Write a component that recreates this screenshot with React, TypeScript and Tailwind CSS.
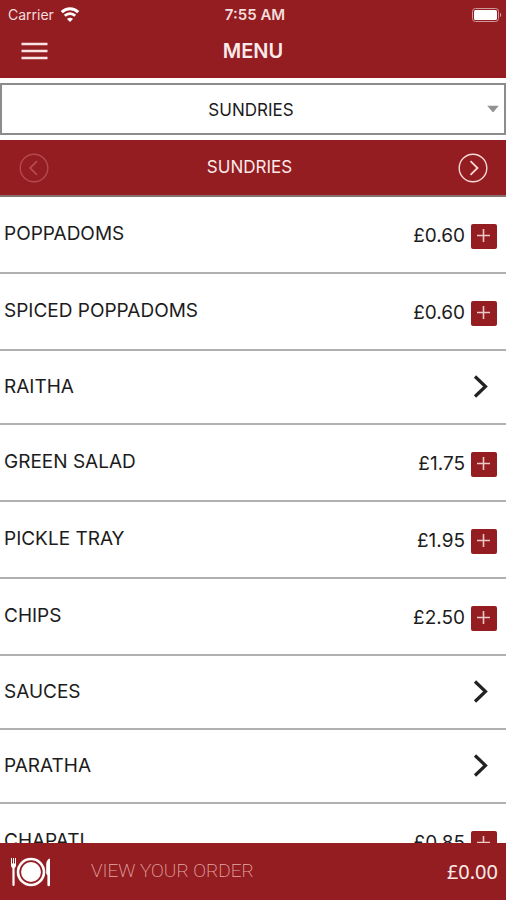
import { useState } from "react";

interface MenuItem {
  name: string;
  price?: number;
}

const sections = ["SUNDRIES"];

const items: MenuItem[] = [
  { name: "POPPADOMS", price: 0.6 },
  { name: "SPICED POPPADOMS", price: 0.6 },
  { name: "RAITHA" },
  { name: "GREEN SALAD", price: 1.75 },
  { name: "PICKLE TRAY", price: 1.95 },
  { name: "CHIPS", price: 2.5 },
  { name: "SAUCES" },
  { name: "PARATHA" },
  { name: "CHAPATI", price: 0.85 },
];

const formatPrice = (value: number) => `£${value.toFixed(2)}`;

function StatusBar() {
  return (
    <div className="grid h-6 grid-cols-3 items-center pt-1 pl-2 pr-1 text-sm text-[#f6dcdc]">
      <div className="flex items-center gap-1.5">
        <span>Carrier</span>
        <svg viewBox="0 0 20 15" className="h-4 w-5" fill="none" stroke="#fff" aria-hidden="true">
          <path d="M1.8 4.6a11.6 11.6 0 0 1 16.4 0" strokeWidth="3" />
          <path d="M4.8 8.2a7.4 7.4 0 0 1 10.4 0" strokeWidth="2.8" />
          <path d="M10 14.4 7 11.4a4.2 4.2 0 0 1 6 0z" fill="#fff" stroke="none" />
        </svg>
      </div>
      <span className="text-center text-[15px] font-semibold">7:55 AM</span>
      <svg viewBox="0 0 30 14" className="h-3.5 w-[30px] justify-self-end" aria-hidden="true">
        <rect x="0.5" y="0.5" width="26" height="13" rx="3" fill="none" stroke="#cf9a9c" />
        <rect x="2" y="2" width="23" height="10" rx="1.5" fill="#fff" />
        <path d="M28 4.8c1.6.6 1.6 3.8 0 4.4z" fill="#cf9a9c" />
      </svg>
    </div>
  );
}

function ArrowButton({
  direction,
  disabled,
}: {
  direction: "left" | "right";
  disabled?: boolean;
}) {
  return (
    <button
      type="button"
      disabled={disabled}
      aria-label={direction === "left" ? "Previous section" : "Next section"}
      className="text-[#f7d9d6] disabled:text-[#b54a4c]"
    >
      <svg viewBox="0 0 30 30" className="size-[30px]" fill="none" stroke="currentColor">
        <circle cx="15" cy="15" r="13.8" strokeWidth="1.4" />
        <path
          d={direction === "left" ? "M18 8.2 11 15l7 6.8" : "M12.5 8.2l7 6.8-7 6.8"}
          strokeWidth="1.8"
        />
      </svg>
    </button>
  );
}

function ItemRow({ item, onAdd }: { item: MenuItem; onAdd: (price: number) => void }) {
  const { name, price } = item;

  if (price === undefined) {
    return (
      <li className="border-b-2 border-[#b0b0b0]">
        <button type="button" className="flex h-[72px] w-full items-center justify-between pl-1 pr-4">
          <span>{name}</span>
          <svg
            viewBox="0 0 18 26"
            className="h-[26px] w-[18px]"
            fill="none"
            stroke="#222"
            strokeWidth="3.2"
            aria-hidden="true"
          >
            <path d="M3 2.5 13.5 12.5 3 22.5" />
          </svg>
        </button>
      </li>
    );
  }

  return (
    <li className="flex h-[77px] items-center justify-between border-b-2 border-[#b0b0b0] pl-1 pr-[9px]">
      <span>{name}</span>
      <div className="flex items-center gap-1.5 pt-1">
        <span>{formatPrice(price)}</span>
        <button
          type="button"
          aria-label={`Add ${name}`}
          onClick={() => onAdd(price)}
          className="rounded-xs bg-[#931d21]"
        >
          <svg viewBox="0 0 26 25" className="h-[25px] w-[26px]" stroke="#ecc9c7" strokeWidth="1.6">
            <path d="M12.5 5v13M6 11.5h13" />
          </svg>
        </button>
      </div>
    </li>
  );
}

function PlateIcon() {
  return (
    <svg viewBox="0 0 40 30" className="h-[30px] w-10" fill="#fff" aria-hidden="true">
      {/* fork */}
      <path d="M0 1h1v5.5h1V1h1v5.5h1V1h1v7.500c0 1.300-.7 2-1.400 2.400V28a1.100 1.100 0 0 1-2.200 0V10.900C.7 10.500 0 9.800 0 8.500z" />
      {/* plate */}
      <circle cx="20" cy="15" r="14.300" />
      <circle cx="20" cy="15" r="10.800" fill="none" stroke="#931d21" strokeWidth="1.700" />
      {/* knife */}
      <path d="M39 1.500V28a1.300 1.300 0 0 1-2.600 0V18.500l-1.200-2V8c0-3 1.300-6 3.800-6.500z" />
    </svg>
  );
}

export default function App() {
  const [section, setSection] = useState(sections[0]);
  const [total, setTotal] = useState(0);

  return (
    <div className="flex h-screen flex-col overflow-hidden bg-white font-['Inter',sans-serif] text-[#1c1c1c]">
      <header className="bg-[#931d21]">
        <StatusBar />
        <div className="grid h-[54px] grid-cols-3 items-center px-5">
          <button type="button" aria-label="Open menu" className="justify-self-start">
            <svg viewBox="0 0 28 18" className="h-[18px] w-7" stroke="#f9e3e2" strokeWidth="2.4">
              <path d="M1.500 2h26M1.500 9h26M1.500 16h26" />
            </svg>
          </button>
          <h1 className="text-center text-xl font-semibold text-[#fbeae9]">MENU</h1>
        </div>
      </header>

      <div className="relative my-[5px]">
        <select
          aria-label="Menu section"
          value={section}
          onChange={(e) => setSection(e.target.value)}
          className="block h-[52px] w-full appearance-none border-2 border-[#8c8c8c] bg-white pt-1 pr-1 text-center text-[17px] [text-align-last:center]"
        >
          {sections.map((name) => (
            <option key={name}>{name}</option>
          ))}
        </select>
        <svg
          viewBox="0 0 12 7"
          className="pointer-events-none absolute right-[7px] top-1/2 h-[7px] w-3 -translate-y-1/2"
          fill="#929292"
          aria-hidden="true"
        >
          <path d="M0 0h12L6 7z" />
        </svg>
      </div>

      <div className="flex h-[57px] items-center justify-between border-b-2 border-[#857070] bg-[#931d21] pl-[19px] pr-[18px]">
        <ArrowButton direction="left" disabled />
        <h2 className="pr-2 text-[17px] text-[#fbeae9]">{section}</h2>
        <ArrowButton direction="right" />
      </div>

      <ul className="min-h-0 flex-1 overflow-hidden text-[19px]">
        {items.map((item) => (
          <ItemRow key={item.name} item={item} onAdd={(price) => setTotal(total + price)} />
        ))}
      </ul>

      <footer className="bg-[#931d21]">
        <button type="button" className="flex h-[57px] w-full items-center pl-[11px] pr-2 text-left">
          <PlateIcon />
          <span className="flex-1 pl-10 font-['Roboto',sans-serif] text-[19px] font-extralight text-[#e3aaa7]">
            VIEW YOUR ORDER
          </span>
          <span className="font-['Noto_Sans',sans-serif] text-xl text-[#fbeae9]">
            {formatPrice(total)}
          </span>
        </button>
      </footer>
    </div>
  );
}
